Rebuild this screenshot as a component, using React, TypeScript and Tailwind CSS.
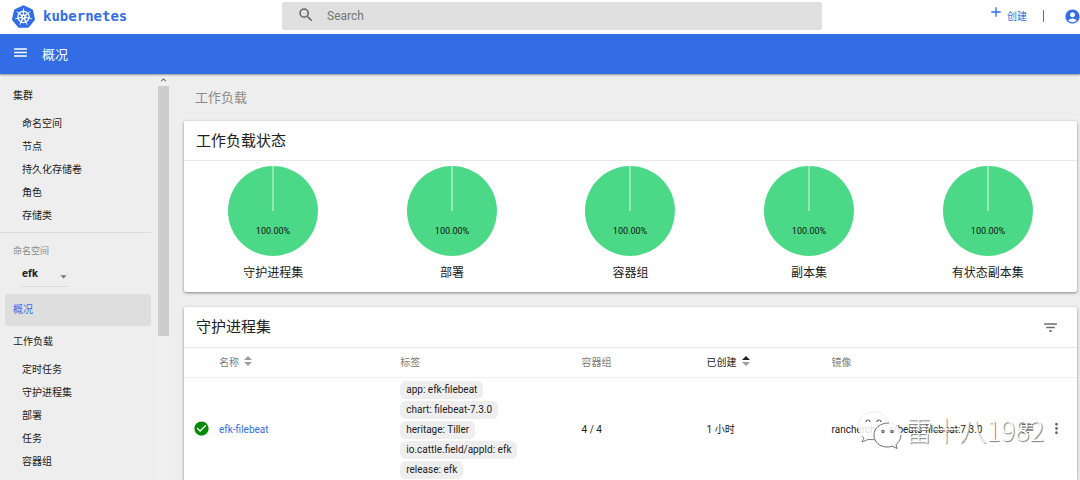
import { SiKubernetes } from "react-icons/si";
import {
  MdSearch,
  MdAdd,
  MdAccountCircle,
  MdMenu,
  MdFilterList,
  MdMoreVert,
  MdCheckCircle,
  MdSubject,
  MdArrowDropDown,
  MdKeyboardArrowUp,
} from "react-icons/md";

const clusterLinks = ["命名空间", "节点", "持久化存储卷", "角色", "存储类"];
const workloadLinks = ["定时任务", "守护进程集", "部署", "任务", "容器组"];
const charts = ["守护进程集", "部署", "容器组", "副本集", "有状态副本集"];
const labels = [
  "app: efk-filebeat",
  "chart: filebeat-7.3.0",
  "heritage: Tiller",
  "io.cattle.field/appId: efk",
  "release: efk",
];

function Header() {
  return (
    <header className="flex h-[34px] shrink-0 items-center bg-white pb-[2px]">
      <a href="#home" className="flex w-[282px] shrink-0 items-center gap-2 pl-3 text-[#326de6]">
        <SiKubernetes className="size-[23px]" aria-hidden />
        <span className="font-['DejaVu_Sans_Mono','Liberation_Mono',monospace] text-[14px] leading-4 font-bold">
          kubernetes
        </span>
      </a>
      <label className="flex h-7 w-1/2 items-center gap-3 rounded-xs bg-[#e0e0e0] pl-[15px]">
        <MdSearch className="mb-[3px] size-[18px] text-[#666]" aria-hidden />
        <input
          type="search"
          aria-label="Search"
          placeholder="Search"
          className="min-w-0 flex-1 bg-transparent text-[12px] outline-none placeholder:text-[#757575]"
        />
      </label>
      <div className="ml-auto flex items-center text-[#326de6]">
        <button type="button" className="flex items-center gap-[3px] text-[10px]">
          <MdAdd className="mb-2 size-4" aria-hidden />
          创建
        </button>
        <span className="mx-4 h-3 w-px bg-[#326de6]" />
        <button type="button" aria-label="账户" className="-mr-px ml-1">
          <MdAccountCircle className="size-[17px]" />
        </button>
      </div>
    </header>
  );
}

function NavList({ items }: { items: string[] }) {
  return (
    <ul className="pl-[22px]">
      {items.map((item) => (
        <li key={item} className="h-[23px] leading-[23px]">
          <a href={`#${item}`}>{item}</a>
        </li>
      ))}
    </ul>
  );
}

function Sidebar() {
  return (
    <aside className="flex w-[169px] shrink-0 overflow-hidden text-[10px] text-[#212121]">
      <nav className="min-w-0 flex-1 pt-[6px]">
        <h2 className="h-8 pl-[13px] leading-8">集群</h2>
        <NavList items={clusterLinks} />
        <hr className="mt-[5px] mr-[7px] border-[#dcdcdc]" />
        <label htmlFor="namespace" className="mt-2 block h-5 pl-[13px] text-[9px] leading-5 text-[#8a8a8a]">
          命名空间
        </label>
        <div className="relative ml-[21px] flex w-[47px] items-center border-b border-[#dadada]">
          <select
            id="namespace"
            defaultValue="efk"
            className="h-[25px] w-full appearance-none bg-transparent pt-[2px] pl-px text-[11px] font-bold outline-none"
          >
            <option value="efk">efk</option>
          </select>
          <MdArrowDropDown className="pointer-events-none absolute top-2 -right-[3px] size-[15px] text-[#777]" aria-hidden />
        </div>
        <a
          href="#overview"
          className="mt-[7px] mr-[7px] ml-[5px] block h-8 rounded-xs bg-[#dedede] pl-2 leading-8 text-[#326de6]"
        >
          概况
        </a>
        <h2 className="h-8 pl-[13px] leading-8">工作负载</h2>
        <NavList items={workloadLinks} />
      </nav>
      <div className="w-[11px] bg-[#f0f0f0]" aria-hidden>
        <MdKeyboardArrowUp className="h-3 w-[11px] text-[#555]" />
        <div className="h-[250px] bg-[#cdcdcd]" />
      </div>
    </aside>
  );
}

function Pie({ name }: { name: string }) {
  return (
    <figure className="flex flex-col items-center">
      <svg viewBox="0 0 90 90" className="size-[90px]" role="img" aria-label={name}>
        <circle cx="45" cy="45" r="45" fill="#4bd987" />
        <path d="M45 0V45" stroke="#b2efca" strokeWidth="1.4" />
        <text x="45" y="68" textAnchor="middle" fontSize="9" fill="#111">
          100.00%
        </text>
      </svg>
      <figcaption className="mt-[9px] text-[12px] leading-4">{name}</figcaption>
    </figure>
  );
}

function StatusCard() {
  return (
    <section className="rounded-xs bg-white pb-[11px] shadow-[0_1px_3px_rgba(0,0,0,0.45)]">
      <h2 className="h-10 border-b border-[#e8e8e8] px-3 text-[15px] leading-10">工作负载状态</h2>
      <div className="grid grid-cols-5 pt-[5px]">
        {charts.map((name) => (
          <Pie key={name} name={name} />
        ))}
      </div>
    </section>
  );
}

function SortIcon({ ascending = false }: { ascending?: boolean }) {
  return (
    <svg viewBox="0 0 8 10" className="mb-[3px] h-[10px] w-2" aria-hidden>
      <path d="M0 4L4 0L8 4Z" fill={ascending ? "#212121" : "#9e9e9e"} />
      <path d="M0 6L4 10L8 6Z" fill="#9e9e9e" />
    </svg>
  );
}

function DaemonSetCard() {
  return (
    <section className="rounded-xs bg-white shadow-[0_1px_3px_rgba(0,0,0,0.45)]">
      <div className="flex h-[41px] items-center justify-between border-b border-[#e8e8e8] pr-[18px] pl-3">
        <h2 className="text-[15px]">守护进程集</h2>
        <button type="button" aria-label="筛选" className="text-[#6b6b6b]">
          <MdFilterList className="size-[17px]" />
        </button>
      </div>
      <table className="w-full table-fixed text-left text-[10px]">
        <colgroup>
          <col className="w-[35px]" />
          <col className="w-[20.3%]" />
          <col className="w-[20.3%]" />
          <col className="w-[14%]" />
          <col className="w-[14%]" />
          <col />
          <col className="w-[62px]" />
        </colgroup>
        <thead>
          <tr className="h-[29px] border-b border-[#f0f0f0] text-[#7c7c7c] [&>th]:p-0 [&>th]:font-normal">
            <th />
            <th>
              <button type="button" className="flex items-center gap-[5px]">
                名称
                <SortIcon />
              </button>
            </th>
            <th>标签</th>
            <th>容器组</th>
            <th>
              <button type="button" className="flex items-center gap-[5px] text-[#212121]">
                已创建
                <SortIcon ascending />
              </button>
            </th>
            <th>镜像</th>
            <th />
          </tr>
        </thead>
        <tbody>
          <tr className="[&>td]:p-0">
            <td>
              <MdCheckCircle className="mb-[3px] ml-[9px] size-[17px] text-[#008a00]" aria-label="正常" />
            </td>
            <td>
              <a href="#efk-filebeat" className="text-[#326de6]">
                efk-filebeat
              </a>
            </td>
            <td>
              <ul className="flex flex-col items-start gap-[2px] py-[3px]">
                {labels.map((label) => (
                  <li
                    key={label}
                    className="h-[18px] rounded-md bg-[#eeeeee] px-[6px] leading-[18px] whitespace-nowrap"
                  >
                    {label}
                  </li>
                ))}
              </ul>
            </td>
            <td>4 / 4</td>
            <td>1 小时</td>
            <td className="whitespace-nowrap">ranchercharts/beats-filebeat:7.3.0</td>
            <td>
              <div className="flex items-center gap-3 pb-[2px] pl-1 text-[#6b6b6b]">
                <button type="button" aria-label="日志">
                  <MdSubject className="size-[17px]" />
                </button>
                <button type="button" aria-label="更多">
                  <MdMoreVert className="size-[17px]" />
                </button>
              </div>
            </td>
          </tr>
        </tbody>
      </table>
    </section>
  );
}

function Watermark() {
  return (
    <div className="pointer-events-none absolute right-9 bottom-[30px] flex items-center gap-[2px]">
      <svg viewBox="0 0 46 40" className="h-10 w-[46px]" fill="#fff" fillOpacity="0.85" aria-hidden>
        <path
          d="M17 2C8 2 1 8 1 16C1 21 3 25 7 28L6 32L11 29.500C13 30.200 15 30.500 17 30.500C26 30.500 32 24 32 16C32 8 26 2 17 2Z"
          stroke="#ddd"
          strokeWidth="0.6"
        />
        <path d="M5 26L7 28L5 32L11 29.500H17" fill="none" stroke="#777" strokeWidth="0.9" />
        <path
          d="M32 13C23 13 17 18 17 25C17 32 23 37 30 37C32 37 34 36.700 35 36L40 38.500L39 34.500C42 32 44 29 44 25C44 18 39 13 32 13Z"
          stroke="#ddd"
          strokeWidth="0.6"
        />
        <path
          d="M32 13C23 13 17 18 17 25C17 32 23 37 30 37C32 37 34 36.700 35 36L40 38.500L39 34.500C42 32 44 29 44 25"
          fill="none"
          stroke="#777"
          strokeWidth="1"
        />
        <g fill="none" stroke="#666" strokeWidth="1.2">
          <path d="M9 12A2 2 0 0 1 13 12M20 12A2 2 0 0 1 24 12" />
          <circle cx="26" cy="21.500" r="1.200" />
          <circle cx="35" cy="21.500" r="1.200" />
        </g>
      </svg>
      <span className="font-['Noto_Sans_CJK_SC',sans-serif] text-[27px] leading-8 font-light text-white [text-shadow:1px_1px_1px_#777]">
        雷十八1982
      </span>
    </div>
  );
}

export default function App() {
  return (
    <div className="relative flex h-screen flex-col overflow-hidden bg-[#eeeeee] font-[Roboto,'Noto_Sans_CJK_SC',sans-serif] text-[#212121]">
      <Header />
      <div className="z-10 flex h-10 shrink-0 items-center gap-[13px] bg-[#326de6] pl-3 text-white shadow-[0_1px_2px_rgba(0,0,0,0.4)]">
        <button type="button" aria-label="菜单">
          <MdMenu className="mb-[3px] size-[17px]" />
        </button>
        <h1 className="pt-px text-[13px]">概况</h1>
      </div>
      <div className="flex min-h-0 flex-1">
        <Sidebar />
        <main className="min-w-0 flex-1 overflow-hidden pr-[3px] pl-[15px]">
          <h2 className="h-[47px] px-[11px] text-[13px] leading-[47px] text-[#8a8a8a]">工作负载</h2>
          <div className="flex flex-col gap-[15px]">
            <StatusCard />
            <DaemonSetCard />
          </div>
        </main>
      </div>
      <Watermark />
    </div>
  );
}
